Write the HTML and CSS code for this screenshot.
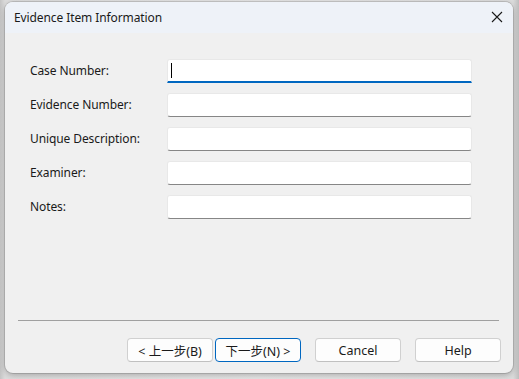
FILE: index.html
```html
<!DOCTYPE html>
<html>
<head>
<meta charset="utf-8">
<link rel="stylesheet" href="styles.css">
</head>
<body>
<div class="backdrop">
  <div class="window">
    <div class="titlebar">
      <span class="title">Evidence Item Information</span>
      <svg class="close" width="12" height="12" viewBox="0 0 12 12"><path d="M1 1 L11 11 M11 1 L1 11" stroke="#1a1a1a" stroke-width="1.1" fill="none"/></svg>
    </div>
    <div class="content">
      <div class="form">
        <label class="lbl">Case Number:</label>
        <div class="field focused"><span class="caret"></span></div>
        <label class="lbl">Evidence Number:</label>
        <div class="field"></div>
        <label class="lbl">Unique Description:</label>
        <div class="field"></div>
        <label class="lbl">Examiner:</label>
        <div class="field"></div>
        <label class="lbl">Notes:</label>
        <div class="field"></div>
      </div>
      <div class="spacer"></div>
      <div class="sep"></div>
      <div class="buttons">
        <button class="btn">&lt; 上一步(B)</button>
        <button class="btn primary">下一步(N) &gt;</button>
        <button class="btn gap">Cancel</button>
        <button class="btn gap">Help</button>
      </div>
    </div>
  </div>
</div>
</body>
</html>
```
FILE: styles.css
```css
html, body {
  margin: 0;
  padding: 0;
  width: 519px;
  height: 379px;
  overflow: hidden;
}
body {
  background: #cfcfcf;
  font-family: "Noto Sans", "Noto Sans CJK SC", sans-serif;
  font-size: 12px;
  color: #1a1a1a;
}
.backdrop {
  width: 519px;
  height: 379px;
  box-sizing: border-box;
  padding: 2px 6px 6px 5px;
  background: linear-gradient(to right, #c4c4c4 0, #dcdcdc 5px, #e6e6e6 50%, #dcdcdc calc(100% - 6px), #bdbdbd 100%);
}
.window {
  width: 508px;
  height: 371px;
  border-radius: 8px;
  overflow: hidden;
  background: #f0f0f0;
  box-shadow: 0 0 0 1px rgba(0,0,0,0.12), 0 2px 6px rgba(0,0,0,0.25);
  display: flex;
  flex-direction: column;
}
.titlebar {
  height: 31px;
  flex: none;
  background: #eef2f8;
  display: flex;
  align-items: center;
  justify-content: space-between;
  padding: 0 10px 0 9px;
}
.title {
  font-size: 12px;
  color: #1a1a1a;
  letter-spacing: -0.1px;
}
.close {
  display: block;
  margin-top: -1px;
}
.content {
  flex: 1;
  display: flex;
  flex-direction: column;
  padding: 26px 0 11px 0;
}
.form {
  display: grid;
  grid-template-columns: 138px 304px;
  grid-auto-rows: 24px;
  row-gap: 10px;
  padding-left: 25px;
  align-items: center;
}
.lbl {
  font-size: 12px;
  color: #1a1a1a;
  letter-spacing: -0.1px;
  line-height: 24px;
  height: 24px;
  margin-top: -1px;
}
.field {
  height: 24px;
  box-sizing: border-box;
  background: #fff;
  border: 1px solid #e8e8e8;
  border-bottom: 1px solid #868686;
  border-radius: 3px;
  position: relative;
  margin-left: -1px;
}
.field.focused {
  border-bottom: 2px solid #0067c0;
  border-radius: 3px 3px 0 0;
}
.caret {
  position: absolute;
  left: 3px;
  top: 3px;
  width: 1px;
  height: 15px;
  background: #000;
}
.spacer {
  flex: 1;
}
.sep {
  height: 1px;
  background: #a0a0a0;
  margin: 0 14px 0 13px;
}
.buttons {
  display: flex;
  justify-content: flex-end;
  margin-top: 17px;
  padding-right: 12px;
}
.btn {
  width: 86px;
  height: 24px;
  box-sizing: border-box;
  background: #fdfdfd;
  border: 1px solid #d0d0d0;
  border-bottom-color: #c0c0c0;
  border-radius: 4px;
  font-family: "Noto Sans", "Noto Sans CJK SC", sans-serif;
  font-size: 12.5px;
  color: #1a1a1a;
  padding: 0;
}
.btn.primary {
  border: 1px solid #0067c0;
  margin-left: 2px;
}
.btn.gap {
  margin-left: 14px;
}
```
